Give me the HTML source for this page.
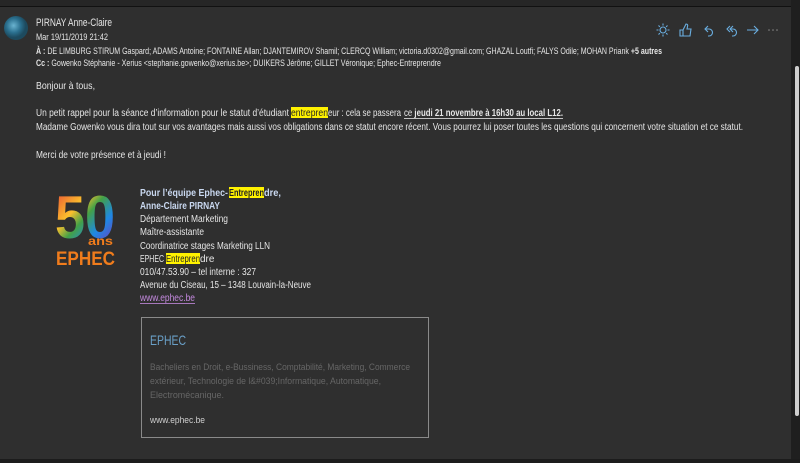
<!DOCTYPE html>
<html><head><meta charset="utf-8"><style>
*{margin:0;padding:0}
body{width:800px;height:463px;background:#2f2f2f;overflow:hidden;position:relative}
svg{position:absolute;left:0;top:0}
text{font-family:"Liberation Sans",sans-serif;fill:#e6e6e6}
</style></head><body>
<svg width="800" height="463" viewBox="0 0 800 463" style="font-size:10px">
<defs><linearGradient id="g" x1="0" y1="0" x2="1" y2="1"><stop offset="0" stop-color="#e53935"/><stop offset=".35" stop-color="#fbc02d"/><stop offset=".5" stop-color="#43a047"/><stop offset=".7" stop-color="#1e88e5"/><stop offset="1" stop-color="#8e24aa"/></linearGradient>
<radialGradient id="av" cx=".4" cy=".4"><stop offset="0" stop-color="#6ab3d0"/><stop offset=".6" stop-color="#2a6f8e"/><stop offset="1" stop-color="#1d4a5e"/></radialGradient></defs>
<rect x="0" y="0" width="800" height="6" fill="#262626"/>
<rect x="0" y="6" width="792" height="1" fill="#111"/>
<rect x="791" y="0" width="9" height="463" fill="#1f1f1f"/>
<rect x="795" y="66" width="4" height="350" rx="2" fill="#cfcfcf"/>
<rect x="0" y="459" width="800" height="4" fill="#1c1c1c"/>
<circle cx="16" cy="28" r="12" fill="url(#av)"/>

<text x="36" y="26" style="font-size:11px" textLength="76" lengthAdjust="spacingAndGlyphs">PIRNAY Anne-Claire</text>
<text x="36" y="40" style="font-size:9px" textLength="72" lengthAdjust="spacingAndGlyphs">Mar 19/11/2019 21:42</text>
<text x="36" y="54" style="font-size:9px" textLength="626" lengthAdjust="spacingAndGlyphs"><tspan font-weight="bold">À :</tspan>  DE LIMBURG STIRUM Gaspard; ADAMS Antoine; FONTAINE Allan; DJANTEMIROV Shamil; CLERCQ William; victoria.d0302@gmail.com; GHAZAL Loutfi; FALYS Odile; MOHAN Priank <tspan font-weight="bold">+5 autres</tspan></text>
<text x="36" y="66" style="font-size:9px" textLength="405" lengthAdjust="spacingAndGlyphs"><tspan font-weight="bold">Cc :</tspan>  Gowenko Stéphanie - Xerius &lt;stephanie.gowenko@xerius.be&gt;; DUIKERS Jérôme; GILLET Véronique; Ephec-Entreprendre</text>

<g fill="none" stroke="#6aaee0" stroke-width="1.1" transform="translate(656,22)">
<circle cx="7" cy="8" r="3"/><path d="M7 1.5v2M7 12.5v2M0.5 8h2M11.5 8h2M2.5 3.5l1.4 1.4M10.1 11.1l1.4 1.4M2.5 12.5l1.4-1.4M10.1 4.9l1.4-1.4"/>
<path d="M24 8h3v6h-3zM27 8l3-6c1.5 0 2 1 1.5 2.5L31 7h4l-1 7h-7"/>
<path d="M52 4l-3 3 3 3M49 7h4a3 3 0 0 1 0 7h-1"/>
<path d="M74 4l-3 3 3 3M77 4l-3 3 3 3M74 7h3a3 3 0 0 1 0 7h-1"/>
<path d="M91 8h11M98 4l4 4-4 4"/>
</g>
<g fill="#888"><circle cx="769" cy="30" r=".8"/><circle cx="773" cy="30" r=".8"/><circle cx="777" cy="30" r=".8"/></g>

<text x="36" y="89" textLength="59" lengthAdjust="spacingAndGlyphs">Bonjour à tous,</text>
<rect x="291" y="107" width="37" height="11" fill="#fff200"/>
<text x="36" y="116" textLength="253" lengthAdjust="spacingAndGlyphs">Un petit rappel pour la séance d’information pour le statut d’étudiant</text>
<text x="291" y="116" textLength="37" lengthAdjust="spacingAndGlyphs" style="fill:#222">entrepren</text>
<text x="328" y="116" textLength="73" lengthAdjust="spacingAndGlyphs">eur : cela se passera</text>
<text x="404" y="116" textLength="159" lengthAdjust="spacingAndGlyphs">ce <tspan font-weight="bold">jeudi 21 novembre à 16h30 au local L12.</tspan></text>
<rect x="404" y="118" width="159" height="0.8" fill="#e6e6e6"/>
<text x="36" y="130" textLength="707" lengthAdjust="spacingAndGlyphs">Madame Gowenko vous dira tout sur vos avantages mais aussi vos obligations dans ce statut encore récent. Vous pourrez lui poser toutes les questions qui concernent votre situation et ce statut.</text>
<text x="36" y="158" textLength="130" lengthAdjust="spacingAndGlyphs">Merci de votre présence et à jeudi !</text>

<text x="55" y="238" style="font-size:60px;font-weight:bold;fill:url(#g)" textLength="60" lengthAdjust="spacingAndGlyphs">50</text>
<text x="88" y="245" style="font-size:12px;font-weight:bold;fill:#f07c1c" textLength="25" lengthAdjust="spacingAndGlyphs">ans</text>
<text x="56" y="265" style="font-size:19px;font-weight:bold;fill:#f07c1c" textLength="59" lengthAdjust="spacingAndGlyphs">EPHEC</text>

<rect x="229" y="187" width="35" height="11" fill="#fff200"/>
<text x="140" y="196" style="font-weight:bold;fill:#c9d8f0" textLength="88" lengthAdjust="spacingAndGlyphs">Pour l’équipe Ephec-</text>
<text x="229" y="196" style="font-weight:bold;fill:#222" textLength="35" lengthAdjust="spacingAndGlyphs">Entrepren</text>
<text x="264" y="196" style="font-weight:bold;fill:#c9d8f0" textLength="17" lengthAdjust="spacingAndGlyphs">dre,</text>
<text x="140" y="209" style="font-weight:bold;fill:#c9d8f0" textLength="80" lengthAdjust="spacingAndGlyphs">Anne-Claire PIRNAY</text>
<text x="140" y="222" textLength="88" lengthAdjust="spacingAndGlyphs">Département Marketing</text>
<text x="140" y="235" textLength="64" lengthAdjust="spacingAndGlyphs">Maître-assistante</text>
<text x="140" y="249" textLength="130" lengthAdjust="spacingAndGlyphs">Coordinatrice stages Marketing LLN</text>
<rect x="166" y="253" width="34" height="11" fill="#fff200"/>
<text x="140" y="262" textLength="24" lengthAdjust="spacingAndGlyphs">EPHEC</text>
<text x="166" y="262" style="fill:#222" textLength="34" lengthAdjust="spacingAndGlyphs">Entrepren</text>
<text x="200" y="262">dre</text>
<text x="140" y="275" textLength="116" lengthAdjust="spacingAndGlyphs">010/47.53.90 – tel interne : 327</text>
<text x="140" y="288" textLength="171" lengthAdjust="spacingAndGlyphs">Avenue du Ciseau, 15 – 1348 Louvain-la-Neuve</text>
<text x="140" y="301" style="fill:#c58ae0" textLength="55" lengthAdjust="spacingAndGlyphs">www.ephec.be</text>
<rect x="140" y="303" width="55" height="0.8" fill="#c58ae0"/>

<rect x="141.5" y="317.5" width="287" height="120" fill="none" stroke="#8a8a8a"/>
<text x="150" y="345" style="font-size:14px;fill:#6aa0c8" textLength="36" lengthAdjust="spacingAndGlyphs">EPHEC</text>
<text x="150" y="370" style="font-size:9px;fill:#666" textLength="260" lengthAdjust="spacingAndGlyphs">Bacheliers en Droit, e-Bussiness, Comptabilité, Marketing, Commerce</text>
<text x="150" y="384" style="font-size:9px;fill:#666" textLength="231" lengthAdjust="spacingAndGlyphs">extérieur, Technologie de l&amp;#039;Informatique, Automatique,</text>
<text x="150" y="398" style="font-size:9px;fill:#666" textLength="74" lengthAdjust="spacingAndGlyphs">Electromécanique.</text>
<text x="150" y="423" style="font-size:9px;fill:#cfcfcf" textLength="55" lengthAdjust="spacingAndGlyphs">www.ephec.be</text>
</svg>
</body></html>
